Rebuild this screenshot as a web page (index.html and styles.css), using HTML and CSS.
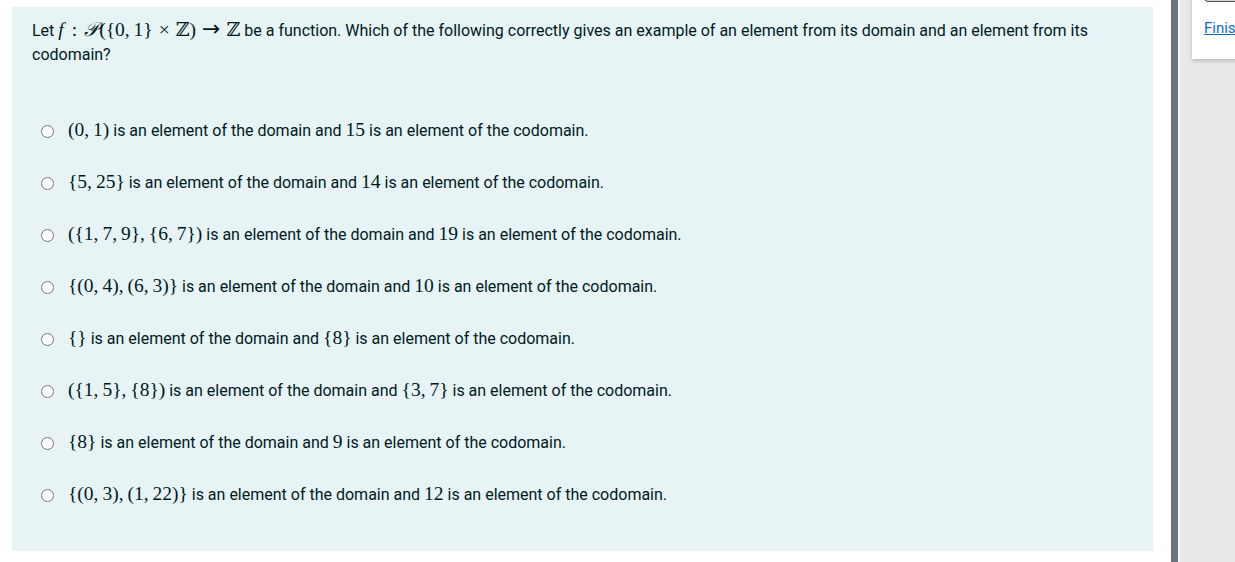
FILE: index.html
```html
<!DOCTYPE html>
<html>
<head>
<meta charset="utf-8">
<link rel="stylesheet" href="styles.css">
</head>
<body>
<div class="page">
  <main class="main">
    <div class="formulation">
      <div class="qtext">Let <span class="m"><i class="fi">f</i><span class="rel">:</span><span class="cal">𝒫</span>({0,&#8201;1}<span class="bin">×</span><span class="bb">ℤ</span>)<span class="arr">→</span><span class="bb">ℤ</span></span> be a function. Which of the following correctly gives an example of an element from its domain and an element from its codomain?</div>
      <div class="answer">
        <label class="opt"><input type="radio" name="a"><span><span class="m">(0,&#8201;1)</span> is an element of the domain and <span class="m">15</span> is an element of the codomain.</span></label>
        <label class="opt"><input type="radio" name="a"><span><span class="m">{5,&#8201;25}</span> is an element of the domain and <span class="m">14</span> is an element of the codomain.</span></label>
        <label class="opt"><input type="radio" name="a"><span><span class="m">({1,&#8201;7,&#8201;9},&#8201;{6,&#8201;7})</span> is an element of the domain and <span class="m">19</span> is an element of the codomain.</span></label>
        <label class="opt"><input type="radio" name="a"><span><span class="m">{(0,&#8201;4),&#8201;(6,&#8201;3)}</span> is an element of the domain and <span class="m">10</span> is an element of the codomain.</span></label>
        <label class="opt"><input type="radio" name="a"><span><span class="m">{}</span> is an element of the domain and <span class="m">{8}</span> is an element of the codomain.</span></label>
        <label class="opt"><input type="radio" name="a"><span><span class="m">({1,&#8201;5},&#8201;{8})</span> is an element of the domain and <span class="m">{3,&#8201;7}</span> is an element of the codomain.</span></label>
        <label class="opt"><input type="radio" name="a"><span><span class="m">{8}</span> is an element of the domain and <span class="m">9</span> is an element of the codomain.</span></label>
        <label class="opt"><input type="radio" name="a"><span><span class="m">{(0,&#8201;3),&#8201;(1,&#8201;22)}</span> is an element of the domain and <span class="m">12</span> is an element of the codomain.</span></label>
      </div>
    </div>
  </main>
  <div class="divider"></div>
  <aside class="drawer">
    <div class="card">
      <button class="btn">Submit</button>
      <a class="finish" href="#">Finish attempt ...</a>
    </div>
  </aside>
</div>
</body>
</html>
```

FILE: styles.css
```css
html, body {
  margin: 0;
  padding: 0;
  height: 100%;
  overflow: hidden;
  background: #ffffff;
}
body {
  font-family: Roboto, "Liberation Sans", sans-serif;
  font-size: 16px;
  color: #001a1e;
}
.page {
  display: flex;
  height: 562px;
}
.main {
  width: 1171px;
  flex: none;
  background: #fff;
  padding: 7px 18px 0 12px;
  box-sizing: border-box;
}
.formulation {
  background: #e7f3f5;
  padding: 11px 20px 31px 20px;
  height: 544px;
  box-sizing: border-box;
}
.qtext {
  line-height: 24px;
}
.m {
  font-family: "Liberation Serif", "DejaVu Serif", serif;
  font-size: 19.5px;
  line-height: 1;
}
.fi {
  padding-right: 1px;
}
.rel {
  margin: 0 7px;
}
.bin {
  margin: 0 6px;
}
.cal {
  font-family: "DejaVu Serif", serif;
  font-style: italic;
  margin-right: 1px;
}
.bb {
  font-family: "DejaVu Serif", serif;
  font-size: 19px;
}
.arr {
  font-family: "DejaVu Sans", sans-serif;
  font-size: 22px;
  margin: 0 6px;
}
.answer {
  margin-top: 38px;
  display: flex;
  flex-direction: column;
}
.opt {
  display: flex;
  align-items: center;
  height: 52px;
  line-height: 24px;
}
.opt input {
  width: 13px;
  height: 13px;
  margin: 0 14px 0 9px;
  flex: none;
}
.divider {
  width: 7px;
  flex: none;
  background: #6a737b;
}
.drawer {
  flex: 1;
  background: #e9e9e9;
  border-left: 2px solid #f6f6f6;
  overflow: hidden;
  padding-left: 12px;
}
.card {
  background: #fff;
  margin-top: -30px;
  height: 89px;
  width: 200px;
  box-shadow: 0 2px 4px rgba(0,0,0,0.2);
  padding: 0 12px;
  box-sizing: border-box;
  display: flex;
  flex-direction: column;
  align-items: flex-start;
}
.btn {
  height: 32px;
  border: 1px solid #4a5157;
  border-radius: 4px;
  background: #ced4da;
  font-family: Roboto, sans-serif;
  font-size: 14px;
  padding: 0 10px;
  margin-top: 0;
  flex: none;
}
.finish {
  margin-top: 17px;
  color: #0f6cbf;
  font-size: 15px;
  text-decoration: underline;
  white-space: nowrap;
}
```
